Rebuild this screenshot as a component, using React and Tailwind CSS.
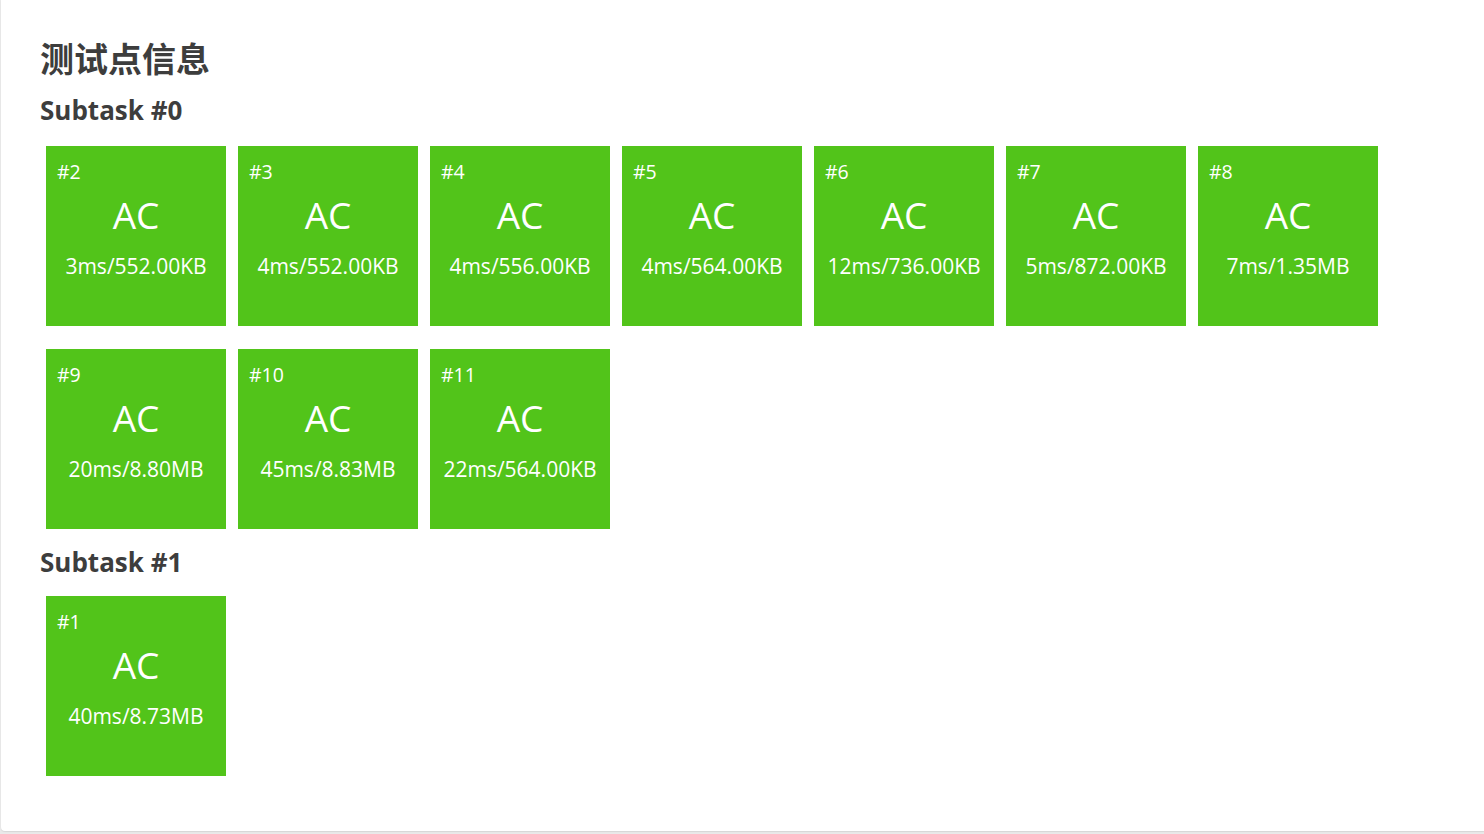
const subtasks = [
  {
    name: 'Subtask #0',
    cases: [
      { id: 2, time: '3ms', mem: '552.00KB' },
      { id: 3, time: '4ms', mem: '552.00KB' },
      { id: 4, time: '4ms', mem: '556.00KB' },
      { id: 5, time: '4ms', mem: '564.00KB' },
      { id: 6, time: '12ms', mem: '736.00KB' },
      { id: 7, time: '5ms', mem: '872.00KB' },
      { id: 8, time: '7ms', mem: '1.35MB' },
      { id: 9, time: '20ms', mem: '8.80MB' },
      { id: 10, time: '45ms', mem: '8.83MB' },
      { id: 11, time: '22ms', mem: '564.00KB' },
    ],
  },
  {
    name: 'Subtask #1',
    cases: [{ id: 1, time: '40ms', mem: '8.73MB' }],
  },
];

function CaseBox({ c }) {
  return (
    <div className="relative w-[180px] h-[180px] bg-[#52c41a] text-white">
      {/* case number */}
      <div className="absolute left-[11px] top-[14px] text-[19.5px] leading-6">#{c.id}</div>
      <div className="flex flex-col items-center pt-[47px]">
        <div className="text-[37px] leading-[44px]">AC</div>
        <div className="mt-[15px] text-[21px] leading-7">
          {c.time}/{c.mem}
        </div>
      </div>
    </div>
  );
}

export default function App() {
  return (
    <div
      className="min-h-[834px] bg-[#e9e9e9] pl-px pb-[3px]"
      style={{ fontFamily: '"Open Sans", "Noto Sans CJK SC", sans-serif' }}
    >
      <div className="h-[831px] bg-white rounded-bl-[4px] shadow-[0_1px_1px_rgba(0,0,0,0.08)] px-[39px] pt-[39px] text-[#3d3d3d]">
        <h2 className="text-[34px] leading-10 font-bold">测试点信息</h2>

        {subtasks.map((st, i) => (
          <div key={st.name} className={i === 0 ? 'mt-[15px]' : 'mt-[17px]'}>
            <h3 className="text-[26px] leading-8 font-bold">{st.name}</h3>
            <div
              className={
                'pl-[6px] flex flex-wrap gap-x-3 gap-y-[23px] w-[1400px] ' +
                (i === 0 ? 'mt-[20px]' : 'mt-[18px]')
              }
            >
              {st.cases.map((c) => (
                <CaseBox key={c.id} c={c} />
              ))}
            </div>
          </div>
        ))}
      </div>
    </div>
  );
}
